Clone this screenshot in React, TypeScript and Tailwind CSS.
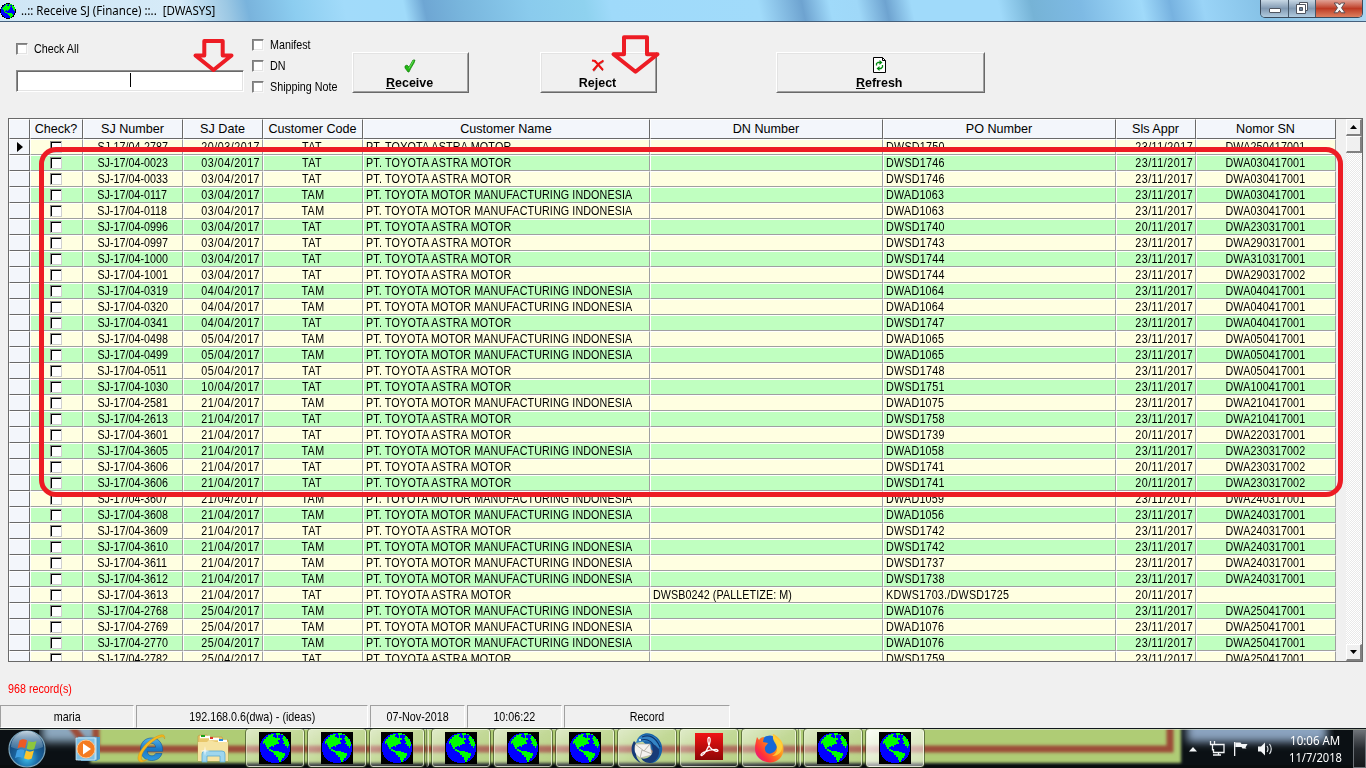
import React from "react";

type Row = [string, string, string, string, string, string, string];

const ASTRA = "PT. TOYOTA ASTRA MOTOR";
const TMMIN = "PT. TOYOTA MOTOR MANUFACTURING INDONESIA";

const rows: Row[] = [
  ["2787", "20/03/2017", "TAT", "", "DWSD1750", "23/11/2017", "DWA250417001"],
  ["0023", "03/04/2017", "TAT", "", "DWSD1746", "23/11/2017", "DWA030417001"],
  ["0033", "03/04/2017", "TAT", "", "DWSD1746", "23/11/2017", "DWA030417001"],
  ["0117", "03/04/2017", "TAM", "", "DWAD1063", "23/11/2017", "DWA030417001"],
  ["0118", "03/04/2017", "TAM", "", "DWAD1063", "23/11/2017", "DWA030417001"],
  ["0996", "03/04/2017", "TAT", "", "DWSD1740", "20/11/2017", "DWA230317001"],
  ["0997", "03/04/2017", "TAT", "", "DWSD1743", "23/11/2017", "DWA290317001"],
  ["1000", "03/04/2017", "TAT", "", "DWSD1744", "23/11/2017", "DWA310317001"],
  ["1001", "03/04/2017", "TAT", "", "DWSD1744", "23/11/2017", "DWA290317002"],
  ["0319", "04/04/2017", "TAM", "", "DWAD1064", "23/11/2017", "DWA040417001"],
  ["0320", "04/04/2017", "TAM", "", "DWAD1064", "23/11/2017", "DWA040417001"],
  ["0341", "04/04/2017", "TAT", "", "DWSD1747", "23/11/2017", "DWA040417001"],
  ["0498", "05/04/2017", "TAM", "", "DWAD1065", "23/11/2017", "DWA050417001"],
  ["0499", "05/04/2017", "TAM", "", "DWAD1065", "23/11/2017", "DWA050417001"],
  ["0511", "05/04/2017", "TAT", "", "DWSD1748", "23/11/2017", "DWA050417001"],
  ["1030", "10/04/2017", "TAT", "", "DWSD1751", "23/11/2017", "DWA100417001"],
  ["2581", "21/04/2017", "TAM", "", "DWAD1075", "23/11/2017", "DWA210417001"],
  ["2613", "21/04/2017", "TAT", "", "DWSD1758", "23/11/2017", "DWA210417001"],
  ["3601", "21/04/2017", "TAT", "", "DWSD1739", "20/11/2017", "DWA220317001"],
  ["3605", "21/04/2017", "TAM", "", "DWAD1058", "23/11/2017", "DWA230317002"],
  ["3606", "21/04/2017", "TAT", "", "DWSD1741", "20/11/2017", "DWA230317002"],
  ["3606", "21/04/2017", "TAT", "", "DWSD1741", "20/11/2017", "DWA230317002"],
  ["3607", "21/04/2017", "TAM", "", "DWAD1059", "23/11/2017", "DWA240317001"],
  ["3608", "21/04/2017", "TAM", "", "DWAD1056", "23/11/2017", "DWA240317001"],
  ["3609", "21/04/2017", "TAT", "", "DWSD1742", "23/11/2017", "DWA240317001"],
  ["3610", "21/04/2017", "TAM", "", "DWSD1742", "23/11/2017", "DWA240317001"],
  ["3611", "21/04/2017", "TAM", "", "DWSD1737", "23/11/2017", "DWA240317001"],
  ["3612", "21/04/2017", "TAM", "", "DWSD1738", "23/11/2017", "DWA240317001"],
  ["3613", "21/04/2017", "TAT", "DWSB0242 (PALLETIZE: M)", "KDWS1703./DWSD1725", "20/11/2017", ""],
  ["2768", "25/04/2017", "TAM", "", "DWAD1076", "23/11/2017", "DWA250417001"],
  ["2769", "25/04/2017", "TAM", "", "DWAD1076", "23/11/2017", "DWA250417001"],
  ["2770", "25/04/2017", "TAM", "", "DWAD1076", "23/11/2017", "DWA250417001"],
  ["2782", "25/04/2017", "TAT", "", "DWSD1759", "23/11/2017", "DWA250417001"],
];

const GRID = "grid grid-cols-[21px_53px_100px_80px_100px_287px_233px_233px_80px_140px]";

const headers = ["Check?", "SJ Number", "SJ Date", "Customer Code", "Customer Name", "DN Number", "PO Number", "Sls Appr", "Nomor SN"];

function Narrow({ children, origin = "origin-center" }: { children: React.ReactNode; origin?: string }) {
  return <span className={`inline-block scale-x-[0.826] whitespace-nowrap ${origin}`}>{children}</span>;
}

function Globe({ size, dark = false }: { size: number; dark?: boolean }) {
  return (
    <svg width={size} height={size} viewBox="0 0 32 32" shapeRendering="crispEdges" className="block shrink-0">
      {dark && <rect width="32" height="32" fill="#000" />}
      <circle cx="16" cy="16" r={dark ? 15.2 : 15.8} fill={dark ? "#0000ff" : "#000"} />
      {!dark && <circle cx="16" cy="16" r="14" fill="#0000ff" />}
      <path
        fill="#00ff00"
        d="M4 9h1V7h2V5h2V3h3V2h3v1h-1v2h2v1h2V4h1v2h2v2h-2v2h1v2h-3v1h-2v2h-1v-1h-2v1h-2v2h2v1h2v2h-2v-1h-2v-2H8v-2H7v-2H6v-2H5v1H4z M17 1h4v2h-2v1h-1V3h-1z M14 19h6v1h3v1h3v3h-1v2h-2v2h-1v2h-2v-2h-1v-3h-2v-2h-2v-2h-1z M24 4h2v1h1v2h2v3h1v4h-1v2h-1v-2h-2v-2h-2v-1h1V9h-1V7h-1V6h1z M22 2h2v1h-2z"
      />
    </svg>
  );
}

function Box({ label }: { label: string }) {
  return (
    <div className="flex h-[21px] items-center gap-[6px]">
      <span className="h-[12px] w-[12px] shrink-0 border border-t-[#7c7c7c] border-r-[#f8f8f8] border-b-[#f8f8f8] border-l-[#7c7c7c] bg-white shadow-[inset_1px_1px_0_#8f8f8f,inset_-1px_-1px_0_#e3e3e3]" />
      <Narrow origin="origin-left">{label}</Narrow>
    </div>
  );
}

function PushButton({ width, icon, children }: { width: string; icon: React.ReactNode; children: React.ReactNode }) {
  return (
    <div className={`flex h-[41px] shrink-0 flex-col items-center border border-t-white border-r-[#696969] border-b-[#696969] border-l-white ${width}`}>
      <div className="flex h-full w-full flex-col items-center border border-t-[#e3e3e3] border-r-[#a0a0a0] border-b-[#a0a0a0] border-l-[#e3e3e3] pt-[3px] pr-[2px]">
        <div className="flex h-[18px] items-center">{icon}</div>
        <span className="scale-x-[0.96] text-[13px] leading-[15px] font-bold">{children}</span>
      </div>
    </div>
  );
}

function Cell({ children, align = "justify-center", bg }: { children?: React.ReactNode; align?: string; bg: string }) {
  return (
    <div className={`flex h-full min-w-0 items-center overflow-hidden border-t border-r border-b border-l border-t-white border-r-[#a0a0a0] border-b-[#a0a0a0] border-l-white ${align} ${bg}`}>
      {children}
    </div>
  );
}

function DataRow({ row, index }: { row: Row; index: number }) {
  const bg = index % 2 ? "bg-[#c0ffc0]" : "bg-[#ffffe1]";
  const [sj, date, code, dn, po, appr, sn] = row;
  return (
    <div className={`${GRID} h-[16px] shrink-0 text-[13px] leading-[14px]`}>
      <div className="flex items-center justify-center border border-t-white border-r-[#696969] border-b-[#696969] border-l-white bg-[#f3f6fb]">
        {index === 0 && (
          <svg width="6" height="10" viewBox="0 0 6 10"><path d="M0 0l6 5-6 5z" fill="#000" /></svg>
        )}
      </div>
      <Cell bg={bg}>
        <span className="mr-px h-[12px] w-[12px] border border-t-[#8c8c8c] border-r-[#d0d0d0] border-b-[#d0d0d0] border-l-[#8c8c8c] bg-white shadow-[inset_1px_1px_0_#000]" />
      </Cell>
      <Cell bg={bg} align="justify-center pr-px"><Narrow>SJ-17/04-{sj}</Narrow></Cell>
      <Cell bg={bg} align="justify-end pr-[2px] tracking-[0.6px]"><Narrow origin="origin-right">{date}</Narrow></Cell>
      <Cell bg={bg} align="justify-center pr-px tracking-[0.5px]"><Narrow>{code}</Narrow></Cell>
      <Cell bg={bg} align={code === "TAT" ? "justify-start pl-[2px] tracking-[0.23px]" : "justify-start pl-[2px] tracking-[0.12px]"}>
        <Narrow origin="origin-left">{code === "TAT" ? ASTRA : TMMIN}</Narrow>
      </Cell>
      <Cell bg={bg} align="justify-start pl-[2px] tracking-[0.1px]"><Narrow origin="origin-left">{dn}</Narrow></Cell>
      <Cell bg={bg} align="justify-start pl-[2px] tracking-[0.3px]"><Narrow origin="origin-left">{po}</Narrow></Cell>
      <Cell bg={bg} align="justify-end pr-[2px] tracking-[0.6px]"><Narrow origin="origin-right">{appr}</Narrow></Cell>
      <Cell bg={bg} align="justify-center pr-[2px] tracking-[0.15px]"><Narrow>{sn}</Narrow></Cell>
    </div>
  );
}

function ScrollButton({ children }: { children?: React.ReactNode }) {
  return (
    <div className="flex h-[17px] w-full shrink-0 items-center justify-center border-t border-r-2 border-b-2 border-l border-t-white border-r-[#808080] border-b-[#808080] border-l-white bg-[#f0f0f0]">
      {children}
    </div>
  );
}

function TitleBar() {
  return (
    <div className="flex h-[22px] shrink-0 items-start border-b border-[#46607c] bg-[linear-gradient(78deg,#cfe6f5_0px,#d6ebf8_180px,#9cc8e4_225px,#79b3dc_245px,#8ccdf0_290px,#a2dbfa_340px,#a0dbfa_398px,#6ea6d3_418px,#79b6dd_455px,#8acbed_520px,#8fd2ef_575px,#9fdafa_600px,#a1dbfa_745px,#6ea3d0_788px,#a0dafa_815px,#9fd8f8_842px,#6ea3d0_870px,#a0dafa_895px,#a0dafa_980px,#76b3d6_1012px,#7ebae4_1060px,#a0dafa_1120px,#77b2e0_1148px,#9ad4f7_1180px,#85c1e6_1240px,#b6dcf3_1366px)]">
      <div className="flex h-[21px] min-w-0 flex-1 items-center">
        <Globe size={16} />
        <span className="ml-[5px] origin-left scale-x-[0.96] font-['Noto_Sans',sans-serif] text-[12px] leading-[18px] whitespace-pre text-black">..:: Receive SJ (Finance) ::..  [DWASYS]</span>
      </div>
      <div className="mr-[3px] flex h-[18px] w-[103px] shrink-0 overflow-hidden rounded-b-[5px] border border-t-0 border-[#394a5c]">
        <div className="flex w-[28px] justify-center border-r border-[#46586a] bg-gradient-to-b from-[#c8d8e5] via-[#8199b2] to-[#b1cbdf] pt-[8px]">
          <span className="h-[5px] w-[12px] rounded-[1px] border border-[#4f5560] bg-white" />
        </div>
        <div className="flex w-[27px] justify-center border-r border-[#46586a] bg-gradient-to-b from-[#c8d8e5] via-[#8199b2] to-[#b1cbdf] pt-[2px]">
          <svg width="12" height="12" viewBox="0 0 12 12" fill="#fff" stroke="#4f5560">
            <path d="M3.5.5h8v8h-8z" />
            <path d="M.5 2.5h9v9h-9z" />
            <path d="M3.5 5.5h3v3h-3z" fill="#6e87a2" />
          </svg>
        </div>
        <div className="flex flex-1 justify-center bg-gradient-to-b from-[#e0a195] via-[#bd3a23] to-[#dd7f5f] pt-[2px]">
          <svg width="13" height="12" viewBox="0 0 13 12">
            <path d="M1.2 1h3.6l1.7 2 1.7-2h3.6L8.5 5.8 12 10.8H8.3l-1.8-2.4-1.8 2.4H1l3.5-5z" fill="#f8f8f8" stroke="#5b4d53" />
          </svg>
        </div>
      </div>
    </div>
  );
}

function Toolbar() {
  return (
    <div className="flex h-[96px] shrink-0 text-[13px] leading-[15px]">
      <div className="flex w-[236px] shrink-0 flex-col pt-[16px] pl-[16px]">
        <Box label="Check All" />
        <div className="mt-[11px] h-[22px] w-[228px] border border-t-[#8c8c8c] border-r-white border-b-white border-l-[#8c8c8c] bg-white pt-[2px] pl-[113px] shadow-[inset_1px_1px_0_#696969,inset_-1px_-1px_0_#e3e3e3]">
          <div className="h-[14px] w-px bg-black" />
        </div>
      </div>
      <div className="flex w-[116px] shrink-0 flex-col pt-[12px] pl-[16px]">
        <Box label="Manifest" />
        <Box label="DN" />
        <Box label="Shipping Note" />
      </div>
      <div className="flex pt-[30px]">
        <PushButton
          width="w-[117px]"
          icon={
            <svg width="12" height="14" viewBox="0 0 12 14">
              <path d="M1 7l2-1 2 2 4-7 2 0-1 3-3 5-2 4H4L1 9z" fill="#22b714" stroke="#118009" strokeWidth=".7" />
              <path d="M9.5 1.5L5 9.5" stroke="#69e05a" />
            </svg>
          }
        ><u>R</u>eceive</PushButton>
        <div className="w-[71px]" />
        <PushButton
          width="w-[117px]"
          icon={
            <svg width="14" height="13" viewBox="0 0 14 13" className="-translate-y-px">
              <path d="M3 2.5l2.5 1.7L12 12M12.5 3L7.5 6 3 12.5" stroke="#888" fill="none" />
              <path d="M1 1.5l3 .5 8 9M12.5 1.5L8 4.5 2 11.5" stroke="#f01010" strokeWidth="2" fill="none" />
            </svg>
          }
        >Re<u>j</u>ect</PushButton>
        <div className="w-[119px]" />
        <PushButton
          width="w-[209px]"
          icon={
            <svg width="13" height="16" viewBox="0 0 13 16" className="-translate-y-px">
              <path d="M.5.5h9l3 3v12H.5z" fill="#fff" stroke="#000" />
              <path d="M9.5.5v3h3" fill="none" stroke="#000" />
              <path d="M3.5 8.5V6.5L5 5.5h2M9.500 8v2L8 11.500H6" fill="none" stroke="#008a10" strokeWidth="1.300" />
              <path d="M6.500 3L9.500 5.500l-3 2.500zM6.500 9l-3 2.500 3 2.500z" fill="#008a10" />
            </svg>
          }
        ><u>R</u>efresh</PushButton>
      </div>
    </div>
  );
}

function DataGrid() {
  return (
    <div className="relative ml-[8px] flex h-[544px] w-[1355px] shrink-0 border border-[#696969]">
      <div className="flex w-[1327px] shrink-0 flex-col overflow-hidden">
        <div className={`${GRID} h-[20px] shrink-0 text-[12.600px] leading-[18px]`}>
          {["", ...headers].map((h, i) => (
            <div key={i} className="flex items-center justify-center border border-t-white border-r-[#696969] border-b-[#696969] border-l-white bg-[#f3f6fb] pr-px whitespace-nowrap">{h}</div>
          ))}
        </div>
        {rows.map((r, i) => <DataRow key={i} row={r} index={i} />)}
      </div>
      <div className="ml-[10px] flex w-[16px] flex-col justify-between bg-[repeating-conic-gradient(#fff_0_25%,#e9e9e9_0_50%)] bg-[length:2px_2px]">
        <div>
          <ScrollButton><svg width="7" height="4" viewBox="0 0 7 4"><path d="M0 4L3.500 0 7 4z" /></svg></ScrollButton>
          <ScrollButton />
        </div>
        <ScrollButton><svg width="7" height="4" viewBox="0 0 7 4"><path d="M0 0h7L3.500 4z" /></svg></ScrollButton>
      </div>
      <div className="pointer-events-none absolute top-[28px] left-[30px] h-[350px] w-[1304px] rounded-[17px] border-[5px] border-[#ed1c24]" />
    </div>
  );
}

function Panel({ width, children }: { width: string; children: string }) {
  return (
    <div className={`flex h-[23px] shrink-0 items-center justify-center border border-t-[#a0a0a0] border-r-white border-b-white border-l-[#a0a0a0] text-[13px] leading-[15px] ${width}`}>
      <Narrow>{children}</Narrow>
    </div>
  );
}

function TaskButton({ stacked = false, active = false, children }: { stacked?: boolean; active?: boolean; children: React.ReactNode }) {
  const fill = active
    ? "bg-gradient-to-br from-white/95 via-white/65 to-white/45"
    : "bg-gradient-to-br from-white/60 via-white/25 to-white/10";
  return (
    <div className="flex h-[39px] w-[62px] shrink-0">
      <div className={`flex h-[38px] items-center justify-center rounded-[3px] border border-[#f2f7dfaa] outline outline-1 outline-[#2e3c1c99] ${fill} ${stacked ? "w-[54px]" : "w-[58px]"}`}>
        {children}
      </div>
      {stacked && <div className="ml-[2px] h-[38px] w-[3px] rounded-r-[3px] border-r border-l border-[#f2f7dfaa] border-l-[#2e3c1c77] bg-white/20" />}
    </div>
  );
}

function StartOrb() {
  return (
    <svg width="40" height="38" viewBox="0 0 40 38" className="shrink-0">
      <defs>
        <radialGradient id="orb" cx=".5" cy=".75" r=".7"><stop offset="0" stopColor="#3fc0ee" /><stop offset=".45" stopColor="#1b65a0" /><stop offset="1" stopColor="#123a66" /></radialGradient>
        <linearGradient id="gloss" x2="0" y2="1"><stop offset="0" stopColor="#d7e6ef" stopOpacity=".9" /><stop offset="1" stopColor="#7fa8c6" stopOpacity=".3" /></linearGradient>
      </defs>
      <circle cx="20" cy="19" r="18" fill="url(#orb)" stroke="#7ca6bd" strokeWidth="1.200" />
      <path d="M4 17a16 16 0 0132 0c-8 4-24 4-32 0z" fill="url(#gloss)" />
      <path d="M12.500 10.500c3-2 5-1.500 7.500-.3l-2 8c-2.500-1.200-4.800-1.400-7.500.2z" fill="#ec5a25" />
      <path d="M21.500 11c3 1.300 5 1.300 8 0l-2.200 8c-2.800 1.300-5 1-7.700-.4z" fill="#8cc63e" />
      <path d="M10 20.200c3-1.600 5-1.200 7.500 0l-2 7.800c-2.500-1.300-4.800-1.400-7.500.2z" fill="#3f9fe3" />
      <path d="M19 20.600c2.800 1.400 5 1.400 7.900 0l-2.200 8c-2.800 1.300-5 1-7.700-.3z" fill="#fdc52c" />
    </svg>
  );
}

function MediaPlayer() {
  return (
    <svg width="27" height="26" viewBox="0 0 27 26" className="shrink-0">
      <path d="M6 1h19v22l-4 2H6z" fill="#4c9ccb" />
      <path d="M3 1h19v23H3z" fill="#a9d7ef" stroke="#438bb5" strokeWidth=".7" />
      <path d="M1 2h19v22H1z" fill="#7fc0e4" stroke="#d7eef8" strokeWidth=".7" />
      <circle cx="11" cy="13" r="9" fill="#f47b20" stroke="#ffc58f" />
      <path d="M8 7.500l8 5.500-8 5.500z" fill="#fff" />
    </svg>
  );
}

function Explorer() {
  return (
    <svg width="31" height="31" viewBox="0 0 31 31" className="shrink-0">
      <defs><linearGradient id="ie" x2="0" y2="1"><stop offset="0" stopColor="#54b4ea" /><stop offset=".5" stopColor="#1a76c4" /><stop offset="1" stopColor="#2f9be0" /></linearGradient></defs>
      <path d="M15.500 5C9 5 4.500 9.500 4.500 16.200S9 27.500 15.700 27.500c5 0 8.800-2.500 10.300-7h-6.300c-.8 1.500-2 2.300-3.800 2.300-2.700 0-4.400-1.600-4.600-4.500h15.400C27 10 22.500 5 15.500 5zm-4.100 9.300c.4-2.500 1.900-4 4.200-4s3.800 1.500 4.100 4z" fill="url(#ie)" stroke="#0f5598" strokeWidth=".6" />
      <path d="M3 28C-1 24 7 12 16 6 24 1 30 0 28.500 6 28.500 3 25 3 19 7 10 13 3 23 6 27c1 1 4 0 6-1-4 3-7 4-9 2z" fill="#f5b81c" stroke="#c98b10" strokeWidth=".4" />
    </svg>
  );
}

function Folder() {
  return (
    <svg width="33" height="30" viewBox="0 0 33 30" className="shrink-0">
      <path d="M1 5V2l2-1h7l2 2h13l1 3h5v21H1z" fill="#e8c76a" stroke="#bd9440" strokeWidth=".6" />
      <path d="M3 3h10M12 5h10M21 7h9" stroke="#fff" strokeWidth="2.500" />
      <path d="M4 2h4" stroke="#19a319" strokeWidth="2" /><path d="M13 4h3" stroke="#dc3727" strokeWidth="2" /><path d="M22 6h4" stroke="#2a88da" strokeWidth="2" />
      <path d="M1 8h9l2-2 7 2h12v19H1z" fill="#f6e3a1" />
      <path d="M5 28v-8q0-3 3-3h17q3 0 3 3v8h-5v-6H10v6z" fill="#9ed6ee" stroke="#5aa9cf" strokeWidth=".8" />
      <path d="M8 12l.7 4.300 4.300.7-4.300.7L8 22l-.7-4.300L3 17l4.300-.7z" fill="#fff" opacity=".85" />
    </svg>
  );
}

function Thunderbird() {
  return (
    <svg width="32" height="32" viewBox="0 0 32 32">
      <path d="M6 8C9 1 18-1 24 4c5 3 8 9 7 15s-5 12-11 12c4-4 4-7 3-11L9 7z" fill="#1763a8" />
      <path d="M5 11C7 3 17 0 25 6l4 6-2 9C25 12 18 7 10 10z" fill="#3484c4" />
      <path d="M11 5c7-3 14 0 18 10M10 8c7-2 13 2 16 13" fill="none" stroke="#0c3671" strokeWidth="1.200" />
      <path d="M4 12l15 0 2 11-12 3-6-5z" fill="#f4f2ef" stroke="#a8a39c" strokeWidth=".6" />
      <path d="M4 12l9 7 6-7M9 26l2-8 10 4" fill="none" stroke="#b6b2aa" />
      <path d="M3 9C-2 17 1 27 10 31c-3-3-5-6-5-9-2-3-2-8 0-11zM20 12c3 5 2 11-2 13-3 2-6 2-8 1 2 4 6 5 10 5 6-2 9-8 8-14l-4-4z" fill="#173b78" />
      <circle cx="9" cy="8" r="1" fill="#fff" />
    </svg>
  );
}

function Acrobat() {
  return (
    <svg width="28" height="27" viewBox="0 0 28 27" className="-translate-y-[2px]">
      <defs><linearGradient id="pdf" x2="0" y2="1"><stop offset="0" stopColor="#f01414" /><stop offset="1" stopColor="#8e0606" /></linearGradient></defs>
      <rect width="28" height="27" fill="url(#pdf)" />
      <path d="M13.500 4.500c1.800-.8 2 2.500 1.200 5.500-1.200 4.800-5.200 11.500-7.700 12.500-1.800.3-1.200-1.700 1.500-3.200 3.800-1.900 8.500-3 12.500-3 3 .7 2.500 2.500-.5 1.900-4-1.200-7-5-7.500-9.700-.2-1.600-.2-3.200.5-4z" fill="none" stroke="#fff" strokeWidth="1.300" />
    </svg>
  );
}

function Firefox() {
  return (
    <svg width="31" height="31" viewBox="0 0 31 31">
      <defs><linearGradient id="fox" x1="1" x2="0" y1="0" y2=".8"><stop offset="0" stopColor="#fff04a" /><stop offset=".45" stopColor="#ff8a18" /><stop offset=".8" stopColor="#ff2f3b" /><stop offset="1" stopColor="#e4148c" /></linearGradient></defs>
      <circle cx="16" cy="13" r="10.500" fill="#1768d8" />
      <path d="M3 4l2 3c1-2 3-3 5-3l-1 5 5 1-3 4c-1 5 3 8 7 6 4-1 6-6 4-10-1-3-4-4-3-9l2 1c5 3 8.500 7 8.500 14 0 8-6 13.500-13.500 13.500S1 24 1 16C1 11 2 8 3 4z" fill="url(#fox)" />
      <path d="M20 1c-2 3-1 6 1 9 4 5 2 11-3 13 7 0 11-5 10-11-1-5-7-6-8-11z" fill="#ffd53c" opacity=".85" />
    </svg>
  );
}

function Tray() {
  return (
    <div className="flex h-[39px] items-center text-white">
      <svg width="88" height="18" viewBox="0 0 88 18" className="shrink-0">
        <path d="M3 11.500l4-4.500 4 4.500z" fill="#f3f5f7" />
        <g fill="none" stroke="#f3f5f7" strokeWidth="1.300">
          <path d="M29 4.500h9v8H27.500V9M27 15h8M32.500 12.500V15" />
          <path d="M24.500 1v3.500h4V1M26.500 4.500v6" />
        </g>
        <path d="M48 2h1.300v14H48zM49.500 2.500h5l1 1.500h6l-2 3.500 1 1h-4l-1-1.500h-6z" fill="#f3f5f7" />
        <path d="M72 6.500h3l4-4v13l-4-4h-3z" fill="#f3f5f7" />
        <path d="M81 6q2 3 0 6M83.500 4q3.500 5 0 10" fill="none" stroke="#e5eaee" strokeWidth="1.100" />
      </svg>
      <div className="ml-[6px] flex w-[70px] shrink-0 flex-col items-center font-['Noto_Sans',sans-serif] text-[12px] leading-[17px] whitespace-nowrap">
        <span className="scale-x-[0.960]">10:06 AM</span>
        <span className="scale-x-[0.930]">11/7/2018</span>
      </div>
      <div className="ml-[3px] h-[38px] w-[13px] shrink-0 border border-[#6b7076] bg-gradient-to-b from-[#6c7076] via-[#262a2f] to-[#15181b]" />
    </div>
  );
}

function Taskbar() {
  return (
    <div className="relative flex h-[40px] shrink-0 overflow-hidden bg-[#0b1014]">
      <svg className="absolute inset-0" width="1366" height="40" viewBox="0 0 1366 40">
        <defs>
          <filter id="soft" x="-5%" y="-50%" width="110%" height="200%"><feGaussianBlur stdDeviation="4" /></filter>
          <filter id="line" x="-5%" y="-100%" width="110%" height="300%"><feGaussianBlur stdDeviation="1.800" /></filter>
        </defs>
        <path d="M42-8h60v22H42z" fill="#8ba7be" filter="url(#soft)" />
        <path d="M94-8h1087v43H90l4-20z" fill="#afcc74" filter="url(#line)" />
        <path d="M70-4l20 26M96-4v25H1170V-4" fill="none" stroke="#9c4c38" strokeWidth="7" filter="url(#line)" />
        <path d="M1187-8h140v22h-140z" fill="#8aa3bf" filter="url(#soft)" />
        <path d="M0 .5h1366" stroke="#10171b" />
        <path d="M0 1.500h1366" stroke="#dce4d1" opacity=".65" />
        <path d="M0 38.500h1366" stroke="#080b0a" strokeWidth="3" opacity=".55" />
      </svg>
      <div className="relative flex w-full pt-px">
        <div className="flex w-[246px] shrink-0 items-center">
          <div className="ml-[7px]"><StartOrb /></div>
          <div className="ml-[28px]"><MediaPlayer /></div>
          <div className="ml-[34px]"><Explorer /></div>
          <div className="ml-[30px]"><Folder /></div>
        </div>
        <TaskButton><Globe size={32} dark /></TaskButton>
        <TaskButton><Globe size={32} dark /></TaskButton>
        <TaskButton stacked><Globe size={32} dark /></TaskButton>
        <TaskButton><Globe size={32} dark /></TaskButton>
        <TaskButton><Globe size={32} dark /></TaskButton>
        <TaskButton><Globe size={32} dark /></TaskButton>
        <TaskButton><Thunderbird /></TaskButton>
        <TaskButton><Acrobat /></TaskButton>
        <TaskButton stacked><Firefox /></TaskButton>
        <TaskButton><Globe size={32} dark /></TaskButton>
        <TaskButton active><Globe size={32} dark /></TaskButton>
        <div className="flex-1" />
        <Tray />
      </div>
    </div>
  );
}

export default function App() {
  return (
    <div className="relative flex h-[768px] w-[1366px] flex-col overflow-hidden bg-[#f0f0f0] font-['Liberation_Sans',Arial,sans-serif] text-black">
      <TitleBar />
      <Toolbar />
      <DataGrid />
      <div className="flex h-[43px] shrink-0 items-end pb-[9px] pl-[8px] text-[13px] leading-[15px] text-[#ff0000]">
        <Narrow origin="origin-left">968 record(s)</Narrow>
      </div>
      <div className="flex h-[23px] shrink-0 gap-[2px]">
        <Panel width="w-[134px]">maria</Panel>
        <Panel width="w-[232px]">192.168.0.6(dwa) - (ideas)</Panel>
        <Panel width="w-[95px]">07-Nov-2018</Panel>
        <Panel width="w-[95px]">10:06:22</Panel>
        <Panel width="w-[166px]">Record</Panel>
      </div>
      <Taskbar />
      <svg className="pointer-events-none absolute top-[30px] left-[190px]" width="480" height="50" viewBox="190 30 480 50" fill="none" stroke="#ed1c24" strokeWidth="4" strokeLinejoin="round">
        <path d="M204.300 41h18.400v14.500h8.800l-18 14.500-18-14.500h8.800z" />
        <path d="M624 37.300h23v17h10.500l-22 17.500-22-17.500H624z" />
      </svg>
    </div>
  );
}
